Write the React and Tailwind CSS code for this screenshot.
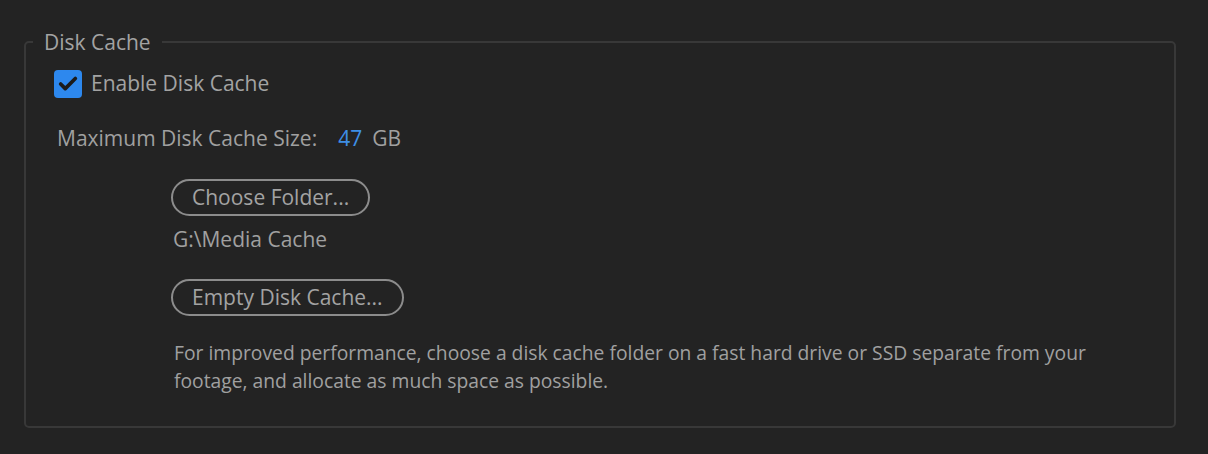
import { Check } from 'lucide-react'

const font = { fontFamily: '"Open Sans", "Noto Sans", sans-serif' }

function PillButton({ children }) {
  return (
    <button className="h-[37px] px-[19px] rounded-full border-2 border-[#8c8c8c] text-[21px] leading-none text-[#a3a3a3] bg-transparent">
      {children}
    </button>
  )
}

export default function App() {
  return (
    <div style={font} className="w-[1208px] h-[454px] bg-[#232323] text-[#a0a0a0] pt-[28px] pl-[24px] overflow-hidden">
      <fieldset className="w-[1152px] border-2 border-[#383838] rounded-[5px] p-0 m-0">
        <legend className="ml-[7px] px-[11px] text-[21px] leading-[28px] text-[#a3a3a3]">Disk Cache</legend>

        <div className="flex flex-col pl-[28px] pt-[14px] pb-[31px]">
          {/* Enable */}
          <label className="flex items-center h-[28px] gap-[9px]">
            <span className="w-[28px] h-[28px] rounded-[4px] bg-[#2d88ee] flex items-center justify-center">
              <Check size={22} strokeWidth={4} color="#1b1b1b" />
            </span>
            <span className="text-[21px] text-[#a3a3a3]">Enable Disk Cache</span>
          </label>

          {/* Size */}
          <div className="flex items-center h-[28px] mt-[27px] ml-[3px] text-[21px]">
            <span>Maximum Disk Cache Size:</span>
            <span className="ml-[21px] text-[#3e8fe6]">47</span>
            <span className="ml-[10px]">GB</span>
          </div>

          <div className="ml-[117px] flex flex-col items-start">
            <div className="mt-[26px]">
              <PillButton>Choose Folder...</PillButton>
            </div>
            <div className="h-[28px] mt-[10px] ml-[2px] flex items-center text-[21px]">G:\Media Cache</div>
            <div className="mt-[25px]">
              <PillButton>Empty Disk Cache...</PillButton>
            </div>
            <p className="mt-[23px] ml-[3px] w-[940px] text-[19.3px] leading-[28px]">
              For improved performance, choose a disk cache folder on a fast hard drive or SSD separate from your footage, and allocate as much space as possible.
            </p>
          </div>
        </div>
      </fieldset>
    </div>
  )
}
